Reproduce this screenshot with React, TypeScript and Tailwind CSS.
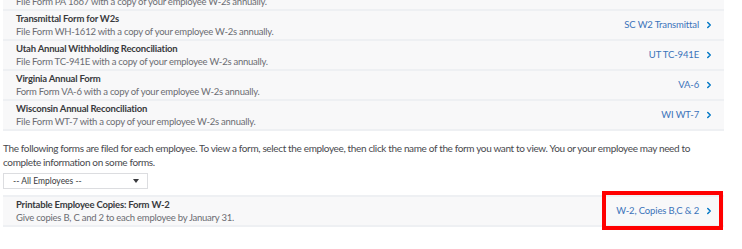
import { ChevronRight } from 'lucide-react';

type Row = { title: string; desc: string; link: string };

const rows: Row[] = [
  { title: 'Transmittal Form for W2s', desc: 'File Form WH-1612 with a copy of your employee W-2s annually.', link: 'SC W2 Transmittal' },
  { title: 'Utah Annual Withholding Reconciliation', desc: 'File Form TC-941E with a copy of your employee W-2s annually.', link: 'UT TC-941E' },
  { title: 'Virginia Annual Form', desc: 'Form Form VA-6 with a copy of your employee W-2s annually.', link: 'VA-6' },
  { title: 'Wisconsin Annual Reconciliation', desc: 'File Form WT-7 with a copy of your employee W-2s annually.', link: 'WI WT-7' },
];

function FormRow({ title, desc, link, boxed }: Row & { boxed?: boolean }) {
  return (
    <div className="flex items-center h-[28px] bg-[#f8f8f9] pl-[13px] pr-[10px]">
      <div className="flex-1 leading-[13px] tracking-[-0.2px]">
        <div className="text-[9.5px] font-bold text-[#393a3d]">{title}</div>
        <div className="text-[9.5px] tracking-[-0.25px] text-[#6b6c72]">{desc}</div>
      </div>
      <div className="relative self-stretch flex items-center gap-[5px] text-[9.5px] tracking-[-0.15px] text-[#3b73b9]">
        <span>{link}</span>
        <ChevronRight className="w-[10px] h-[10px] text-[#0077c5]" strokeWidth={3.5} />
        {boxed && (
          <div className="absolute -left-[14px] -right-[9px] -top-[6px] -bottom-[5px] border-[4px] border-[#ff0000]" />
        )}
      </div>
    </div>
  );
}

export default function App() {
  return (
    <div className="w-[742px] h-[249px] bg-white overflow-hidden font-['Lato',sans-serif] pl-[3px] pr-[18px]">
      <div className="flex flex-col gap-[2px] bg-[#eef0f3] pb-[2px] -mt-[19px]">
        <FormRow title="Pennsylvania Annual Reconciliation" desc="File Form PA 1667 with a copy of your employee W-2s annually." link="PA-W3" />
        {rows.map((r) => (
          <FormRow key={r.link} {...r} />
        ))}
      </div>

      <p className="mt-[10px] text-[10px] tracking-[-0.35px] leading-[14px] text-[#48494e]">
        The following forms are filed for each employee. To view a form, select the employee, then click the name of the form you want to view. You or your employee may need to complete information on some forms.
      </p>

      <div className="mt-[4px] w-[145px] h-[16px] border border-[#dcdde0] flex items-center justify-between pl-[9px] pr-[8px] text-[8.5px] text-[#393a3d]">
        <span>-- All Employees --</span>
        <span className="w-0 h-0 border-l-[3px] border-r-[3px] border-t-[4px] border-l-transparent border-r-transparent border-t-[#393a3d]" />
      </div>

      <div className="mt-[6px] bg-[#eef0f3] py-[2px]">
        <FormRow title="Printable Employee Copies: Form W-2" desc="Give copies B, C and 2 to each employee by January 31." link="W-2, Copies B,C & 2" boxed />
      </div>
    </div>
  );
}
